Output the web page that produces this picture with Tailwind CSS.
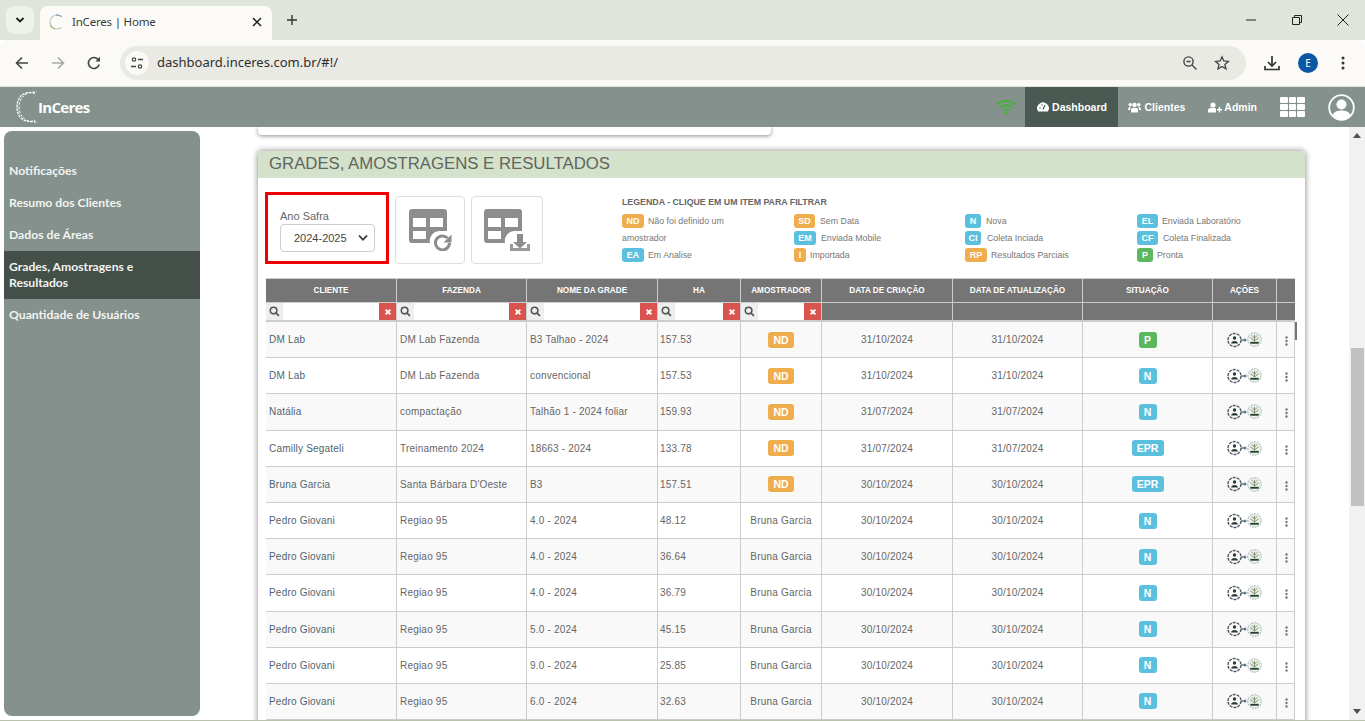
<!DOCTYPE html>
<html lang="en">
<head>
    <meta charset="UTF-8">
    <title>InCeres | Home</title>
    <script src="https://cdn.jsdelivr.net/npm/@tailwindcss/browser@4"></script>
</head>
<body class="h-[721px] overflow-hidden bg-white font-['Liberation_Sans',sans-serif]">
    <svg class="hidden">
        <symbol id="i-a" viewBox="0 0 20 16">
            <circle cx="7.5" cy="8" r="6.5" fill="none" stroke="#4b5a63" stroke-width="1.4" stroke-dasharray="3 1"/>
            <circle cx="7.5" cy="6" r="1.7" fill="#2c3a35"/>
            <path d="M4 11.5c.5-2 2-2.600 3.500-2.600S10.500 9.500 11 11.500z" fill="#2c3a35"/>
            <path d="M14 8h3" stroke="#4b5a63" stroke-width="1.200"/>
            <circle cx="18" cy="8" r="1.500" fill="#5b7d8c"/>
        </symbol>
        <symbol id="i-b" viewBox="0 0 16 16">
            <circle cx="8" cy="8" r="7.200" fill="#eef3ea" stroke="#94aab4" stroke-width="1" stroke-dasharray="2 1"/>
            <path d="M8 3v6.500M5 3.500l3 3 3-3M3.500 6l4.500 3.500L12.500 6" fill="none" stroke="#6d7f62" stroke-width=".9"/>
            <path d="M3.500 10.500h9V12.500h-9z" fill="#23402c"/>
        </symbol>
        <symbol id="i-s" viewBox="0 0 12 12">
            <circle cx="5" cy="5" r="3.600" fill="none" stroke="#555" stroke-width="1.700"/>
            <path d="M7.500 7.500 10.800 10.800" stroke="#555" stroke-width="2"/>
        </symbol>
        <symbol id="i-x" viewBox="0 0 10 10">
            <path d="M2 2 8 8M8 2 2 8" stroke="#fff" stroke-width="2.400"/>
        </symbol>
        <symbol id="i-t" viewBox="0 0 38 34">
            <path d="M3 0h32a3 3 0 0 1 3 3v19h-8a10 10 0 0 0-9 12H3a3 3 0 0 1-3-3V3a3 3 0 0 1 3-3z" fill="#8f8d8b"/>
            <path d="M4 9h13v9H4zM21 9h13v9H21zM4 22h13v8H4z" fill="#fff"/>
        </symbol>
    </svg>

    <!-- browser tabs -->
    <div class="h-10 bg-[#dfe5da] flex items-end pl-[6px] relative">
        <div class="w-[28px] h-[28px] mb-[6px] rounded-lg bg-[#eef3e9] flex items-center justify-center">
            <svg width="12" height="12" viewBox="0 0 12 12"><path d="M2.500 4 6 7.500 9.500 4" fill="none" stroke="#1f1f1f" stroke-width="1.800"/></svg>
        </div>
        <div class="w-[232px] h-[34px] ml-[6px] bg-[#fbfaf6] rounded-t-lg flex items-center pl-[8px] pb-[3px] text-[#3a3a3a] font-['Noto_Sans',sans-serif] text-[11.500px] tracking-[-.2px]">
            <svg width="16" height="16" viewBox="0 0 16 16"><path d="M13.500 2.600A7 7 0 1 0 13.500 13.400" fill="none" stroke="#b7c7bd" stroke-width="1.200"/><path d="M8 1.100a7 7 0 0 1 5.500 1.500" fill="none" stroke="#7a8fc0" stroke-width="1.200"/><path d="M2 11.500a7 7 0 0 0 5 3.300" fill="none" stroke="#9ccb6a" stroke-width="1.200"/></svg>
            <span class="ml-[8px]">InCeres | Home</span>
            <svg class="ml-auto mr-[10px]" width="10" height="10" viewBox="0 0 10 10"><path d="M1 1 9 9M9 1 1 9" stroke="#1f1f1f" stroke-width="1.500"/></svg>
        </div>
        <svg class="mb-[14px] ml-[14px]" width="12" height="12" viewBox="0 0 12 12"><path d="M6 1v10M1 6h10" stroke="#333" stroke-width="1.400"/></svg>
        <div class="ml-auto flex items-center h-10 pr-[15px] gap-[32px]">
            <svg width="14" height="14" viewBox="0 0 14 14"><path d="M2 7h10" stroke="#222" stroke-width="1"/></svg>
            <svg width="14" height="14" viewBox="0 0 14 14"><path d="M2.500 4.500h7v7h-7zM4.500 4.500v-2h7v7h-2" fill="none" stroke="#222" stroke-width="1"/></svg>
            <svg width="14" height="14" viewBox="0 0 14 14"><path d="M1.500 1.500 12.500 12.500M12.500 1.500 1.500 12.500" stroke="#222" stroke-width="1"/></svg>
        </div>
    </div>

    <!-- browser toolbar -->
    <div class="h-[47px] bg-[#fbfaf6] rounded-t-lg flex items-center pl-[14px] pr-[13px] border-b border-[#e4e4de]">
        <svg width="16" height="16" viewBox="0 0 16 16"><path d="M14 8H2.500M8 2.500 2.500 8 8 13.500" fill="none" stroke="#444" stroke-width="1.600"/></svg>
        <svg class="ml-[20px]" width="16" height="16" viewBox="0 0 16 16"><path d="M2 8h11.500M8 2.500 13.500 8 8 13.500" fill="none" stroke="#a9a9a6" stroke-width="1.600"/></svg>
        <svg class="ml-[20px]" width="16" height="16" viewBox="0 0 16 16"><path d="M13.200 9.500A5.500 5.500 0 1 1 12 4.300L13.500 6" fill="none" stroke="#444" stroke-width="1.600"/><path d="M14 1.800V6.500H9.300z" fill="#444"/></svg>
        <div class="ml-[18px] w-[1126px] h-[34px] rounded-full bg-[#e9eae3] flex items-center pl-[5px] pr-[16px] text-[13px] text-[#2e2e2e] font-['Noto_Sans',sans-serif]">
            <div class="w-6 h-6 rounded-full bg-[#fbfaf6] flex items-center justify-center">
                <svg width="14" height="14" viewBox="0 0 14 14"><circle cx="4" cy="3.500" r="1.700" fill="none" stroke="#444" stroke-width="1.200"/><path d="M8 3.500h5M1 10.500h5" stroke="#444" stroke-width="1.400"/><circle cx="10" cy="10.500" r="1.700" fill="none" stroke="#444" stroke-width="1.200"/></svg>
            </div>
            <span class="ml-[8px]">dashboard.inceres.com.br/#!/</span>
            <svg class="ml-auto" width="16" height="16" viewBox="0 0 16 16"><circle cx="6.500" cy="6.500" r="4.600" fill="none" stroke="#444" stroke-width="1.400"/><path d="M4.500 6.500h4M10 10l4.500 4.500" stroke="#444" stroke-width="1.400"/></svg>
            <svg class="ml-[16px]" width="16" height="16" viewBox="0 0 16 16"><path d="M8 1.800 9.800 6l4.600.4-3.500 3 1.100 4.500L8 11.500 4 13.900l1-4.500-3.500-3L6.200 6z" fill="none" stroke="#444" stroke-width="1.300"/></svg>
        </div>
        <svg class="ml-[17px]" width="18" height="18" viewBox="0 0 18 18"><path d="M9 2v9.500M5 8l4 4 4-4M2 12v3.500h14V12" fill="none" stroke="#333" stroke-width="1.700"/></svg>
        <div class="ml-[17px] w-5 h-5 rounded-full bg-[#0b57a4] text-white text-[10px] flex items-center justify-center font-['Noto_Sans',sans-serif]">E</div>
        <svg class="ml-[17px]" width="16" height="16" viewBox="0 0 16 16"><circle cx="8" cy="3" r="1.500" fill="#333"/><circle cx="8" cy="8" r="1.500" fill="#333"/><circle cx="8" cy="13" r="1.500" fill="#333"/></svg>
    </div>

    <!-- app navbar -->
    <nav class="h-10 bg-[#84918c] flex items-center text-white text-[10.500px] font-bold">
        <svg class="ml-[15px]" width="24" height="34" viewBox="0 0 24 34"><path d="M20 3.500C9 0 2 7 2 17s7 17 18 13.500" fill="none" stroke="#fff" stroke-width="1.300" stroke-dasharray="2.500 1"/><path d="M22 2C12 1 4 7 4 17S12 33 22 32" fill="none" stroke="#fff" stroke-width="1" stroke-dasharray="2.500 1.500" stroke-dashoffset="2"/></svg>
        <span class="text-[15px] tracking-[-.7px] font-['Open_Sans',sans-serif] font-bold -ml-[1px]">InCeres</span>
        <svg class="ml-auto" width="20" height="16" viewBox="0 0 20 16"><path d="M1 5.500a13 13 0 0 1 18 0M4 8.500a9 9 0 0 1 12 0M7 11.500a5 5 0 0 1 6 0" fill="none" stroke="#3fb52f" stroke-width="1.800"/><circle cx="10" cy="14" r="1.500" fill="#3fb52f"/></svg>
        <div class="ml-[9px] h-10 w-[93px] bg-[#4a5a53] flex items-center justify-center gap-[3px]">
            <svg width="12" height="10" viewBox="0 0 12 10"><path d="M1.200 9.500A5.800 5.800 0 1 1 10.800 9.500z" fill="#fff"/><path d="M6 7.500 8 3" stroke="#4a5a53" stroke-width="1.200"/><circle cx="3" cy="6" r=".7" fill="#4a5a53"/><circle cx="5" cy="3" r=".7" fill="#4a5a53"/></svg>
            <span class="mt-px">Dashboard</span>
        </div>
        <div class="ml-[10px] flex items-center gap-[3px]">
            <svg width="13" height="11" viewBox="0 0 13 11" fill="#fff"><circle cx="6.500" cy="3" r="2.300"/><circle cx="2.200" cy="2.700" r="1.700"/><circle cx="10.800" cy="2.700" r="1.700"/><path d="M3 10.500V7.500Q3 6 4.500 6h4Q10 6 10 7.500v3zM0 7.500Q0 5 2 5h.800L2 7v1H0zM13 7.500Q13 5 11 5h-.800L11 7v1h2z"/></svg>
            <span class="mt-px">Clientes</span>
        </div>
        <div class="ml-[23px] flex items-center gap-[2px]">
            <svg width="14" height="11" viewBox="0 0 14 11" fill="#fff"><circle cx="5" cy="3" r="2.600"/><path d="M0 10.500V8.500Q0 6 2.500 6h5L8 7.500v3zM9 7h1.800V5h1.400v2H14v1.500h-1.800v2h-1.400v-2H9z"/></svg>
            <span class="mt-px">Admin</span>
        </div>
        <div class="ml-[23px] grid grid-cols-3 gap-[1px] w-[25px]">
            <i class="h-[6px] bg-white rounded-[1px]"></i><i class="h-[6px] bg-white rounded-[1px]"></i><i class="h-[6px] bg-white rounded-[1px]"></i>
            <i class="h-[6px] bg-white rounded-[1px]"></i><i class="h-[6px] bg-white rounded-[1px]"></i><i class="h-[6px] bg-white rounded-[1px]"></i>
            <i class="h-[6px] bg-white rounded-[1px]"></i><i class="h-[6px] bg-white rounded-[1px]"></i><i class="h-[6px] bg-white rounded-[1px]"></i>
        </div>
        <svg class="ml-[23px] mr-[10px]" width="27" height="27" viewBox="0 0 27 27"><circle cx="13.500" cy="13.500" r="12.300" fill="none" stroke="#fff" stroke-width="1.800"/><circle cx="13.500" cy="10.500" r="5" fill="#fff"/><path d="M4.500 21.500C6 17 10 16.500 13.500 16.500S21 17 22.500 21.500A12 12 0 0 1 4.500 21.500z" fill="#fff"/></svg>
    </nav>

    <div class="flex h-[593px]">
        <!-- sidebar -->
        <aside class="ml-1 mt-1 mb-1 w-[196px] rounded-lg bg-[#84918c] pt-6 text-[12.200px] font-bold text-[#f2f4f1] font-['Lato',sans-serif] leading-4">
            <div class="px-[5px] py-2">Notificações</div>
            <div class="px-[5px] py-2">Resumo dos Clientes</div>
            <div class="px-[5px] py-2">Dados de Áreas</div>
            <div class="px-[5px] py-2 bg-[#434f48]">Grades, Amostragens e<br>Resultados</div>
            <div class="px-[5px] py-2">Quantidade de Usuários</div>
        </aside>

        <main class="flex-1 pl-[58px] pr-[44px] overflow-hidden">
            <div class="w-[513px] h-2 bg-white rounded-b shadow-[0_1px_4px_rgba(0,0,0,.45)]"></div>

            <section class="mt-4 rounded-t shadow-[0_0_6px_rgba(0,0,0,.5)] bg-white h-[600px]">
                <h2 class="h-[27px] bg-[#d5e2cb] pl-[11px] text-[16.750px] leading-[25px] text-[#5f665f] rounded-t">GRADES, AMOSTRAGENS E RESULTADOS</h2>

                <div class="flex h-[100px] pl-[7px]">
                    <div class="mt-[14px] w-[124px] h-[72px] border-[3px] border-[#f00000] pl-[12px] pt-[14px] text-[11px] text-[#666]">
                        <div class="leading-[14px] mb-[1px]">Ano Safra</div>
                        <div class="w-[95px] h-[28px] border border-[#ccc] rounded flex items-center pl-[13px] text-[#444]">
                            2024-2025
                            <svg class="ml-auto mr-[6px]" width="10" height="8" viewBox="0 0 10 8"><path d="M1 1.500 5 5.800 9 1.500" fill="none" stroke="#333" stroke-width="1.800"/></svg>
                        </div>
                    </div>
                    <button class="mt-[18px] ml-[6px] w-[70px] h-[68px] border border-[#ddd] rounded flex items-center justify-center">
                        <svg width="43" height="42" viewBox="0 0 43 42"><use href="#i-t" width="38" height="34"/><path d="M40.500 34a7 7 0 1 1-2-5" fill="none" stroke="#8f8d8b" stroke-width="3"/><path d="M42.500 25.500v8h-8z" fill="#8f8d8b"/></svg>
                    </button>
                    <button class="mt-[18px] ml-[6px] w-[72px] h-[68px] border border-[#ddd] rounded flex items-center justify-center">
                        <svg width="46" height="42" viewBox="0 0 46 42"><use href="#i-t" width="38" height="34"/><path d="M33 25h6v8h4l-7 6.500-7-6.500h4z" fill="#8f8d8b"/><path d="M27.500 35v5.500h17V35" fill="none" stroke="#9c9a98" stroke-width="3"/></svg>
                    </button>

                    <div class="ml-[79px] mt-[18px] w-[683px] text-[8.800px] leading-[17px] text-[#777]">
                        <div class="font-bold text-[#666] text-[8.800px] leading-[13px] mb-1">LEGENDA - CLIQUE EM UM ITEM PARA FILTRAR</div>
                        <div class="grid grid-cols-[172px_171px_172px_168px]">
                            <div>
                                <div><span class="inline-block w-[22px] h-[14px] mr-1 rounded-[3px] bg-[#f0ad4e] text-white text-[9px] font-bold text-center leading-[14px]">ND</span>Não foi definido um<br>amostrador</div>
                                <div><span class="inline-block w-[22px] h-[14px] mr-1 rounded-[3px] bg-[#5bc0de] text-white text-[9px] font-bold text-center leading-[14px]">EA</span>Em Analise</div>
                            </div>
                            <div>
                                <div><span class="inline-block w-[21px] h-[14px] mr-[5px] rounded-[3px] bg-[#f0ad4e] text-white text-[9px] font-bold text-center leading-[14px]">SD</span>Sem Data</div>
                                <div><span class="inline-block w-[22px] h-[14px] mr-[5px] rounded-[3px] bg-[#5bc0de] text-white text-[9px] font-bold text-center leading-[14px]">EM</span>Enviada Mobile</div>
                                <div><span class="inline-block w-[12px] h-[14px] mr-1 rounded-[3px] bg-[#f0ad4e] text-white text-[9px] font-bold text-center leading-[14px]">I</span>Importada</div>
                            </div>
                            <div>
                                <div><span class="inline-block w-[16px] h-[14px] mr-[5px] rounded-[3px] bg-[#5bc0de] text-white text-[9px] font-bold text-center leading-[14px]">N</span>Nova</div>
                                <div><span class="inline-block w-[16px] h-[14px] mr-[6px] rounded-[3px] bg-[#5bc0de] text-white text-[9px] font-bold text-center leading-[14px]">CI</span>Coleta Inciada</div>
                                <div><span class="inline-block w-[22px] h-[14px] mr-1 rounded-[3px] bg-[#f0ad4e] text-white text-[9px] font-bold text-center leading-[14px]">RP</span>Resultados Parciais</div>
                            </div>
                            <div>
                                <div><span class="inline-block w-[21px] h-[14px] mr-1 rounded-[3px] bg-[#5bc0de] text-white text-[9px] font-bold text-center leading-[14px]">EL</span>Enviada Laboratório</div>
                                <div><span class="inline-block w-[21px] h-[14px] mr-[5px] rounded-[3px] bg-[#5bc0de] text-white text-[9px] font-bold text-center leading-[14px]">CF</span>Coleta Finalizada</div>
                                <div><span class="inline-block w-[16px] h-[14px] mr-1 rounded-[3px] bg-[#5cb85c] text-white text-[9px] font-bold text-center leading-[14px]">P</span>Pronta</div>
                            </div>
                        </div>
                    </div>
                </div>

                <!-- table -->
                <div class="ml-2 w-[1029px] relative">
                    <div class="grid grid-cols-[130px_130px_131px_83px_81px_131px_130px_130px_64px_19px] bg-[#757575] text-white text-[8.200px] font-bold text-center leading-[23px] h-[25px] border-y border-[#ccc] [&>div+div]:border-l [&>div+div]:border-[#ccc]">
                        <div>CLIENTE</div><div>FAZENDA</div><div>NOME DA GRADE</div><div>HA</div><div>AMOSTRADOR</div><div>DATA DE CRIAÇÃO</div><div>DATA DE ATUALIZAÇÃO</div><div>SITUAÇÃO</div><div>AÇÕES</div><div></div>
                    </div>
                    <div id="filters" class="grid grid-cols-[130px_130px_131px_83px_81px_131px_130px_130px_64px_19px] bg-[#757575] h-[19px] border-b-2 border-[#ccc] [&>div+div]:border-l [&>div+div]:border-[#ccc]"></div>
                    <div id="rows" class="text-[10px] tracking-[.2px] text-[#666]"></div>
                    <div class="absolute left-[1029px] top-[44px] w-[2px] h-[18px] bg-[#757575]"></div>
                </div>
            </section>
        </main>

        <!-- page scrollbar -->
        <div class="w-4 bg-[#f1f1f1] flex flex-col items-center justify-between py-[6px] relative">
            <svg width="8" height="5" viewBox="0 0 8 5"><path d="M4 0 8 5H0z" fill="#505050"/></svg>
            <svg width="8" height="5" viewBox="0 0 8 5"><path d="M4 5 8 0H0z" fill="#505050"/></svg>
            <div class="absolute left-[2px] top-[221px] w-[13px] h-[158px] bg-[#c1c1c1]"></div>
        </div>
    </div>
    <div class="h-px bg-[#bcc2ac]"></div>

    <script>
        const data = [
            ["DM Lab", "DM Lab Fazenda", "B3 Talhao - 2024", "157.53", "ND", "31/10/2024", "31/10/2024", "P"],
            ["DM Lab", "DM Lab Fazenda", "convencional", "157.53", "ND", "31/10/2024", "31/10/2024", "N"],
            ["Natália", "compactação", "Talhão 1 - 2024 foliar", "159.93", "ND", "31/07/2024", "31/07/2024", "N"],
            ["Camilly Segateli", "Treinamento 2024", "18663 - 2024", "133.78", "ND", "31/07/2024", "31/07/2024", "EPR"],
            ["Bruna Garcia", "Santa Bárbara D'Oeste", "B3", "157.51", "ND", "30/10/2024", "30/10/2024", "EPR"],
            ["Pedro Giovani", "Regiao 95", "4.0 - 2024", "48.12", "Bruna Garcia", "30/10/2024", "30/10/2024", "N"],
            ["Pedro Giovani", "Regiao 95", "4.0 - 2024", "36.64", "Bruna Garcia", "30/10/2024", "30/10/2024", "N"],
            ["Pedro Giovani", "Regiao 95", "4.0 - 2024", "36.79", "Bruna Garcia", "30/10/2024", "30/10/2024", "N"],
            ["Pedro Giovani", "Regiao 95", "5.0 - 2024", "45.15", "Bruna Garcia", "30/10/2024", "30/10/2024", "N"],
            ["Pedro Giovani", "Regiao 95", "9.0 - 2024", "25.85", "Bruna Garcia", "30/10/2024", "30/10/2024", "N"],
            ["Pedro Giovani", "Regiao 95", "6.0 - 2024", "32.63", "Bruna Garcia", "30/10/2024", "30/10/2024", "N"],
        ];

        const filterCell = `<div class="flex items-stretch bg-[#eeeeee]">
            <span class="w-[17px] flex items-center justify-center"><svg width="11" height="11"><use href="#i-s"/></svg></span>
            <span class="flex-1 bg-white"></span>
            <span class="w-[17px] flex items-center justify-center bg-[#d9534f]"><svg width="8" height="8"><use href="#i-x"/></svg></span>
        </div>`;
        document.getElementById("filters").innerHTML =
            filterCell.repeat(5) + "<div></div>".repeat(5);

        function badge(code) {
            const color = code === "P" ? "bg-[#5cb85c]" : "bg-[#5bc0de]";
            const width = code === "EPR" ? "w-[32px]" : "w-[18px]";
            return `<span class="inline-block ${width} h-[16px] rounded-[3px] ${color} text-white text-[10.500px] font-bold tracking-normal text-center leading-[16px]">${code}</span>`;
        }

        document.getElementById("rows").innerHTML = data.map((r, i) => {
            const stripe = i % 2 === 0 ? "bg-[#f9f9f9]" : "bg-white";
            const amostrador = r[4] === "ND"
                ? `<span class="inline-block w-[26px] h-[16px] rounded-[3px] bg-[#f0ad4e] text-white text-[10.500px] font-bold tracking-normal text-center leading-[16px]">ND</span>`
                : r[4];
            return `<div class="grid grid-cols-[130px_130px_131px_83px_81px_131px_130px_130px_64px_19px] h-[36.2px] items-center ${stripe} border-b border-r border-[#ccc] [&>div]:h-full [&>div]:flex [&>div]:items-center [&>div+div]:border-l [&>div+div]:border-[#ccc]">
                <div class="pl-[3px] text-[#4f6470]">${r[0]}</div>
                <div class="pl-[3px]">${r[1]}</div>
                <div class="pl-[3px]">${r[2]}</div>
                <div class="pl-[2px]">${r[3]}</div>
                <div class="justify-center">${amostrador}</div>
                <div class="justify-center">${r[5]}</div>
                <div class="justify-center">${r[6]}</div>
                <div class="justify-center">${badge(r[7])}</div>
                <div class="justify-center"><svg width="20" height="16"><use href="#i-a"/></svg><svg width="15" height="15"><use href="#i-b"/></svg></div>
                <div class="justify-center"><svg class="mt-[3px]" width="3" height="10" viewBox="0 0 3 10"><circle cx="1.500" cy="1.500" r="1.200" fill="#777"/><circle cx="1.500" cy="5" r="1.200" fill="#777"/><circle cx="1.500" cy="8.500" r="1.200" fill="#777"/></svg></div>
            </div>`;
        }).join("");
    </script>
</body>
</html>
